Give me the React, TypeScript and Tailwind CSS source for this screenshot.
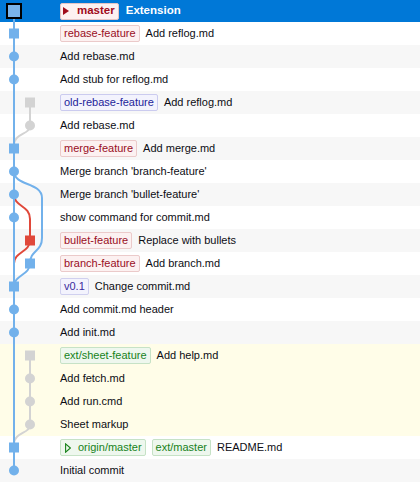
import React from "react";

type RefKind = "local" | "remote" | "tag" | "old" | "head" | "remoteHead";
type Ref = { kind: RefKind; name: string };
type Row = { refs: Ref[]; msg: string; bg: "w" | "g" | "y" };

const rows: Row[] = [
  { refs: [{ kind: "local", name: "rebase-feature" }], msg: "Add reflog.md", bg: "w" },
  { refs: [], msg: "Add rebase.md", bg: "g" },
  { refs: [], msg: "Add stub for reflog.md", bg: "w" },
  { refs: [{ kind: "old", name: "old-rebase-feature" }], msg: "Add reflog.md", bg: "g" },
  { refs: [], msg: "Add rebase.md", bg: "w" },
  { refs: [{ kind: "local", name: "merge-feature" }], msg: "Add merge.md", bg: "g" },
  { refs: [], msg: "Merge branch 'branch-feature'", bg: "w" },
  { refs: [], msg: "Merge branch 'bullet-feature'", bg: "g" },
  { refs: [], msg: "show command for commit.md", bg: "w" },
  { refs: [{ kind: "local", name: "bullet-feature" }], msg: "Replace with bullets", bg: "g" },
  { refs: [{ kind: "local", name: "branch-feature" }], msg: "Add branch.md", bg: "w" },
  { refs: [{ kind: "tag", name: "v0.1" }], msg: "Change commit.md", bg: "g" },
  { refs: [], msg: "Add commit.md header", bg: "w" },
  { refs: [], msg: "Add init.md", bg: "g" },
  { refs: [{ kind: "remote", name: "ext/sheet-feature" }], msg: "Add help.md", bg: "y" },
  { refs: [], msg: "Add fetch.md", bg: "y" },
  { refs: [], msg: "Add run.cmd", bg: "y" },
  { refs: [], msg: "Sheet markup", bg: "y" },
  {
    refs: [
      { kind: "remoteHead", name: "origin/master" },
      { kind: "remote", name: "ext/master" },
    ],
    msg: "README.md",
    bg: "w",
  },
  { refs: [], msg: "Initial commit", bg: "g" },
];

const bgClass: Record<Row["bg"], string> = {
  w: "bg-white",
  g: "bg-[#f7f7f7]",
  y: "bg-[#fffde8]",
};

const refClass: Record<RefKind, string> = {
  local: "bg-[#fcf1f1] border-[#ebcaca] text-[#990e1e]",
  old: "bg-[#f3f3fd] border-[#cbcbef] text-[#23239a]",
  tag: "bg-[#f3f3fd] border-[#d0d0ef] text-[#3a2a9e]",
  remote: "bg-[#eef7ee] border-[#c6e2c6] text-[#17821a]",
  remoteHead: "bg-[#eef7ee] border-[#c6e2c6] text-[#17821a]",
  head: "bg-[#fdf1f1] border-[#e4c4c4] text-[#a00c1c]",
};

function Badge({ r }: { r: Ref }) {
  return (
    <span
      className={
        "inline-flex items-center h-[17px] px-[3px] mr-[6px] border rounded-[2px] leading-none whitespace-nowrap " +
        refClass[r.kind]
      }
    >
      {r.kind === "remoteHead" && (
        <svg width="6" height="10" viewBox="0 0 6 10" className="mr-[7px] ml-[1px]">
          <path d="M0.6 0.8 L5.4 5 L0.6 9.2 Z" fill="none" stroke="#17821a" strokeWidth="1.1" />
        </svg>
      )}
      {r.name}
    </span>
  );
}

const BLUE = "#72b1eb";
const GRAY = "#d3d3d3";
const RED = "#e0483a";

const cy = (i: number) => (i === 0 ? 11 : 22 + (i - 1) * 23 + 11.5);
const L0 = 14;
const L1 = 30;

type Node = { row: number; lane: number; shape: "sq" | "ci"; color: string };
const nodes: Node[] = [
  { row: 1, lane: L0, shape: "sq", color: BLUE },
  { row: 2, lane: L0, shape: "ci", color: BLUE },
  { row: 3, lane: L0, shape: "ci", color: BLUE },
  { row: 4, lane: L1, shape: "sq", color: GRAY },
  { row: 5, lane: L1, shape: "ci", color: GRAY },
  { row: 6, lane: L0, shape: "sq", color: BLUE },
  { row: 7, lane: L0, shape: "ci", color: BLUE },
  { row: 8, lane: L0, shape: "ci", color: BLUE },
  { row: 9, lane: L0, shape: "ci", color: BLUE },
  { row: 10, lane: L1, shape: "sq", color: RED },
  { row: 11, lane: L1, shape: "sq", color: BLUE },
  { row: 12, lane: L0, shape: "sq", color: BLUE },
  { row: 13, lane: L0, shape: "ci", color: BLUE },
  { row: 14, lane: L0, shape: "ci", color: BLUE },
  { row: 15, lane: L1, shape: "sq", color: GRAY },
  { row: 16, lane: L1, shape: "ci", color: GRAY },
  { row: 17, lane: L1, shape: "ci", color: GRAY },
  { row: 18, lane: L1, shape: "ci", color: GRAY },
  { row: 19, lane: L0, shape: "sq", color: BLUE },
  { row: 20, lane: L0, shape: "ci", color: BLUE },
];

function Graph() {
  return (
    <svg
      width="60"
      height="482"
      viewBox="0 0 60 482"
      className="absolute top-0 left-0 pointer-events-none"
    >
      <g fill="none" strokeWidth="2">
        <path d="M30 102.5 V125.5 C30 135 14 133 14 145" stroke={GRAY} />
        <path d="M30 355.5 V424.5 C30 434 14 432 14 444" stroke={GRAY} />
        <path d="M14 194.5 C14 207 30 205 30 219 V240.5 C30 252 14 252 14 263.5" stroke={RED} />
        <path
          d="M14 171.5 C14 186 42 182 42 198 V238 C42 252 30 250 30 263.5 C30 275 14 275 14 286.5"
          stroke={BLUE}
        />
        <path d="M14 11 V470.5" stroke={BLUE} />
      </g>
      <rect x="7" y="4" width="14" height="14" fill="#7ab4ea" stroke="#000" strokeWidth="2" />
      {nodes.map((n, i) =>
        n.shape === "sq" ? (
          <rect key={i} x={n.lane - 5} y={cy(n.row) - 5} width="10" height="10" fill={n.color} />
        ) : (
          <circle key={i} cx={n.lane} cy={cy(n.row)} r="5" fill={n.color} />
        )
      )}
    </svg>
  );
}

export default function App() {
  return (
    <div
      className="relative w-[420px] h-[499px] bg-white text-[11px] text-[#0d0d14] overflow-hidden"
      style={{ fontFamily: '"Liberation Sans", Arial, sans-serif' }}
    >
      <div className="flex items-center h-[22px] pl-[60px] bg-[#0078d7]">
        <span className="inline-flex items-center h-[17px] pl-[1px] pr-[3px] mr-[7px] border rounded-[2px] leading-none bg-[#fdf1f1] border-[#e4c4c4] text-[#a00c1c] font-bold text-[11.5px]">
          <svg width="6" height="8" viewBox="0 0 6 8" className="mr-[8px] ml-[1px]">
            <path d="M0 0 L6 4 L0 8 Z" fill="#a00c1c" />
          </svg>
          master
        </span>
        <span className="text-white font-bold text-[11.5px]">Extension</span>
      </div>
      {rows.map((r, i) => (
        <div key={i} className={"flex items-center h-[23px] pl-[60px] " + bgClass[r.bg]}>
          {r.refs.map((ref, j) => (
            <Badge key={j} r={ref} />
          ))}
          <span className="whitespace-nowrap">{r.msg}</span>
        </div>
      ))}
      <Graph />
    </div>
  );
}
